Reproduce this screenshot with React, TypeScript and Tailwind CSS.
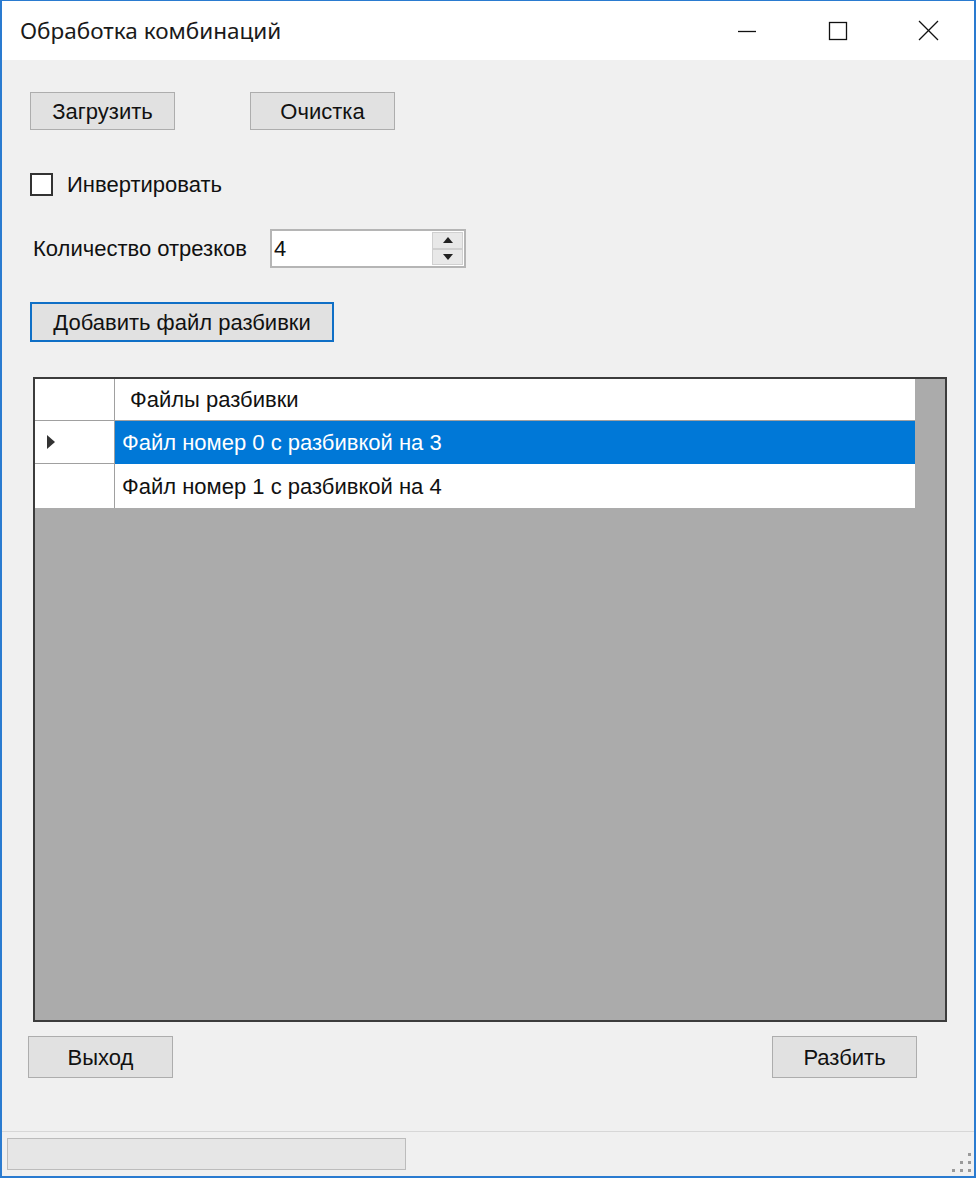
import React from "react";

const body = { fontFamily: '"Liberation Sans", Arial, sans-serif' };

function WinButton({ children, className = "" }: { children: React.ReactNode; className?: string }) {
  return (
    <div
      className={`flex items-center justify-center bg-[#e1e1e1] border border-[#adadad] text-[22px] text-[#111] ${className}`}
    >
      {children}
    </div>
  );
}

export default function App() {
  return (
    <div
      className="w-[976px] h-[1178px] flex flex-col border-x-2 border-b-2 border-t border-[#2a7bd0] bg-[#f0f0f0] overflow-hidden"
      style={body}
    >
      {/* Title bar */}
      <div className="h-[59px] bg-white flex items-center shrink-0">
        <div className="pl-[18px] text-[22.5px] text-[#1a1a1a] flex-1" style={{ fontFamily: '"Noto Sans", sans-serif' }}>
          Обработка комбинаций
        </div>
        <div className="flex items-center h-full">
          <div className="w-[91px] h-full flex items-center justify-center">
            <svg width="20" height="20" viewBox="0 0 20 20">
              <line x1="1" y1="10.5" x2="19" y2="10.5" stroke="#111" strokeWidth="1.3" />
            </svg>
          </div>
          <div className="w-[91px] h-full flex items-center justify-center">
            <svg width="20" height="20" viewBox="0 0 20 20">
              <rect x="1.5" y="1.5" width="17" height="17" fill="none" stroke="#111" strokeWidth="1.3" />
            </svg>
          </div>
          <div className="w-[91px] h-full flex items-center justify-center">
            <svg width="21" height="21" viewBox="0 0 21 21">
              <line x1="1" y1="1" x2="20" y2="20" stroke="#111" strokeWidth="1.3" />
              <line x1="20" y1="1" x2="1" y2="20" stroke="#111" strokeWidth="1.3" />
            </svg>
          </div>
        </div>
      </div>

      {/* Body */}
      <div className="flex-1 flex flex-col pl-[28px] pr-[27px]">
        <div className="flex gap-[75px] mt-[32px]">
          <WinButton className="w-[145px] h-[38px]">Загрузить</WinButton>
          <WinButton className="w-[145px] h-[38px]">Очистка</WinButton>
        </div>

        <div className="flex items-center mt-[42px] h-[24px]">
          <div className="w-[23px] h-[23px] border-2 border-[#333] bg-white" />
          <span className="ml-[14px] text-[22px] text-[#111]">Инвертировать</span>
        </div>

        <div className="flex items-center mt-[33px]">
          <span className="ml-[3px] text-[22px] text-[#111] w-[237px] whitespace-nowrap">Количество отрезков</span>
          <div className="w-[196px] h-[39px] border-2 border-[#b5b5b5] bg-white flex">
            <div className="flex-1 pl-[2px] text-[22px] text-[#111] flex items-center">4</div>
            <div className="w-[31px] flex flex-col my-[1px] mr-[1px]">
              <div className="flex-1 flex items-center justify-center bg-[#e8e8e8] border border-[#d0d0d0]">
                <svg width="10" height="6" viewBox="0 0 10 6"><polygon points="0,6 10,6 5,0" fill="#222" /></svg>
              </div>
              <div className="flex-1 flex items-center justify-center bg-[#e8e8e8] border border-[#d0d0d0]">
                <svg width="10" height="6" viewBox="0 0 10 6"><polygon points="0,0 10,0 5,6" fill="#222" /></svg>
              </div>
            </div>
          </div>
        </div>

        <div className="mt-[34px]">
          <div className="w-[304px] h-[40px] flex items-center justify-center bg-[#e1e1e1] border-2 border-[#0f6fc6] text-[22px] text-[#111] whitespace-nowrap">
            Добавить файл разбивки
          </div>
        </div>

        {/* Grid */}
        <div className="mt-[35px] ml-[3px] w-[914px] h-[645px] border-2 border-[#3c3c3c] bg-[#ababab] flex flex-col">
          <div className="flex w-[880px]">
            <div className="w-[80px] h-[42px] bg-white border-r border-b border-[#a0a0a0]" />
            <div className="flex-1 h-[42px] bg-white border-b border-[#a0a0a0] flex items-center pl-[15px] text-[22px] text-[#111]">
              Файлы разбивки
            </div>
          </div>
          <div className="flex w-[880px]">
            <div className="w-[80px] h-[43px] bg-white border-r border-b border-[#a0a0a0] flex items-center pl-[12px]">
              <svg width="8" height="14" viewBox="0 0 8 14"><polygon points="0,0 8,7 0,14" fill="#333" /></svg>
            </div>
            <div className="flex-1 h-[43px] bg-[#0078d7] flex items-center pl-[7px] text-[22px] text-white">
              Файл номер 0 с разбивкой на 3
            </div>
          </div>
          <div className="flex w-[880px]">
            <div className="w-[80px] h-[44px] bg-white border-r border-[#a0a0a0]" />
            <div className="flex-1 h-[44px] bg-white flex items-center pl-[7px] text-[22px] text-[#111]">
              Файл номер 1 с разбивкой на 4
            </div>
          </div>
        </div>

        <div className="flex justify-between mt-[14px] ml-[-2px] w-[889px]">
          <WinButton className="w-[145px] h-[42px]">Выход</WinButton>
          <WinButton className="w-[145px] h-[42px]">Разбить</WinButton>
        </div>
      </div>

      {/* Status strip */}
      <div className="h-[45px] shrink-0 border-t border-[#d7d7d7] flex items-center pl-[5px] relative">
        <div className="w-[399px] h-[32px] border border-[#bcbcbc] bg-[#e6e6e6]" />
        <div className="absolute right-[3px] bottom-[4px] grid grid-cols-3 gap-[5px]">
          {[0, 0, 1, 0, 1, 1, 1, 1, 1].map((v, i) => (
            <div key={i} className={`w-[3px] h-[3px] ${v ? "bg-[#9a9a9a]" : ""}`} />
          ))}
        </div>
      </div>
    </div>
  );
}
